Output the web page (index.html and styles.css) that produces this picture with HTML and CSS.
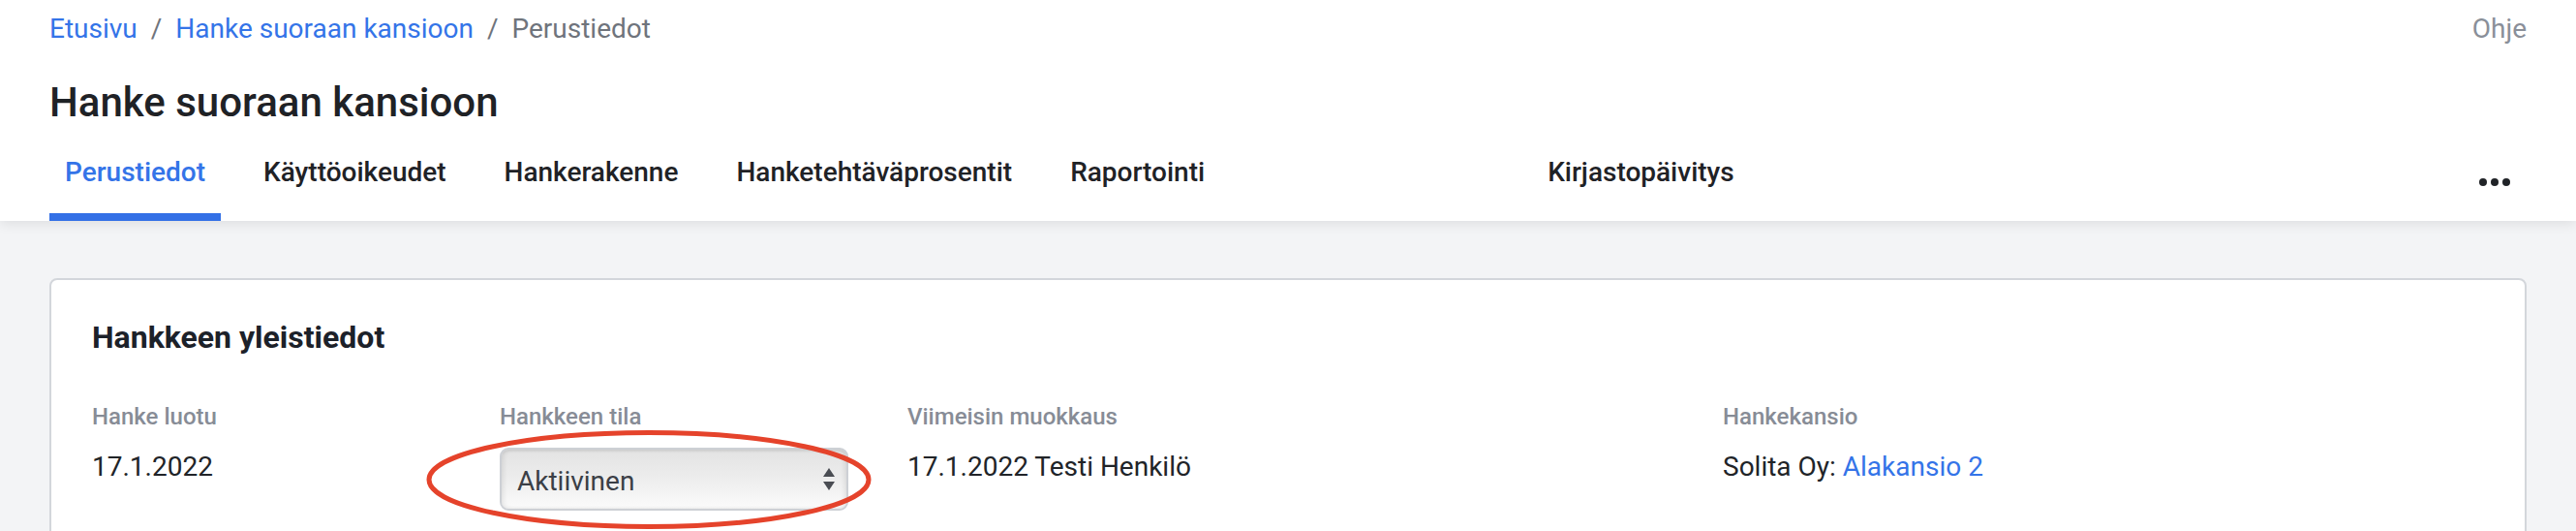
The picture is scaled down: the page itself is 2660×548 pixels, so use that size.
FILE: index.html
```html
<!DOCTYPE html>
<html lang="fi">
<head>
<meta charset="utf-8">
<title>Hanke suoraan kansioon – Perustiedot</title>
<link rel="stylesheet" href="styles.css">
</head>
<body>
<header class="topbar">
  <div class="crumbs-row">
    <nav class="crumbs">
      <a class="crumb-link" href="#">Etusivu</a>
      <span class="sep">/</span>
      <a class="crumb-link" href="#">Hanke suoraan kansioon</a>
      <span class="sep">/</span>
      <span class="crumb-current">Perustiedot</span>
    </nav>
    <a class="help" href="#">Ohje</a>
  </div>
  <h1 class="page-title">Hanke suoraan kansioon</h1>
  <nav class="tabs">
    <a class="tab active" href="#">Perustiedot</a>
    <a class="tab" href="#">Käyttöoikeudet</a>
    <a class="tab" href="#">Hankerakenne</a>
    <a class="tab" href="#">Hanketehtäväprosentit</a>
    <a class="tab" href="#">Raportointi</a>
    <a class="tab tab-far" href="#">Kirjastopäivitys</a>
    <button class="tab more" type="button" aria-label="Lisää">
      <svg width="32" height="8" viewBox="0 0 32 8"><circle cx="4" cy="4" r="4"/><circle cx="16" cy="4" r="4"/><circle cx="28" cy="4" r="4"/></svg>
    </button>
  </nav>
</header>
<main class="content">
  <section class="card">
    <h2 class="card-title">Hankkeen yleistiedot</h2>
    <div class="fields">
      <div class="field">
        <div class="label">Hanke luotu</div>
        <div class="value">17.1.2022</div>
      </div>
      <div class="field">
        <div class="label">Hankkeen tila</div>
        <div class="select-wrap">
          <div class="select">
            <span>Aktiivinen</span>
            <svg class="select-arrows" width="12" height="23" viewBox="0 0 12 23"><path d="M6 0 L12 9 L0 9 Z"/><path d="M0 14 L12 14 L6 23 Z"/></svg>
          </div>
          <svg class="annotation" width="460" height="102" viewBox="0 0 460 102"><ellipse cx="230" cy="51" rx="227" ry="48.5"/></svg>
        </div>
      </div>
      <div class="field">
        <div class="label">Viimeisin muokkaus</div>
        <div class="value">17.1.2022 Testi Henkilö</div>
      </div>
      <div class="field field-folder">
        <div class="label">Hankekansio</div>
        <div class="value">Solita Oy: <a class="link" href="#">Alakansio 2</a></div>
      </div>
    </div>
  </section>
</main>
</body>
</html>
```

FILE: styles.css
```css
html, body {
  margin: 0;
  padding: 0;
  overflow: hidden;
}
body {
  font-family: Roboto, "Liberation Sans", Arial, sans-serif;
  background: #f3f4f6;
  color: #202327;
}
a {
  text-decoration: none;
}

/* Header */
.topbar {
  background: #ffffff;
  padding: 0 51px;
  box-shadow: 0 3px 12px rgba(0, 0, 0, 0.09);
  position: relative;
}
.crumbs-row {
  display: flex;
  justify-content: space-between;
  padding-top: 12px;
  font-size: 28px;
  line-height: 36px;
}
.crumbs {
  display: flex;
}
.crumb-link {
  color: #3474e8;
}
.sep {
  color: #6f747c;
  margin: 0 14px;
}
.crumb-current {
  color: #6f747c;
}
.help {
  color: #8a8f99;
}
.page-title {
  margin: 32px 0 0;
  font-size: 42px;
  line-height: 52px;
  font-weight: 500;
  color: #1f2226;
}
.tabs {
  display: flex;
  gap: 28px;
  margin-top: 26px;
}
.tab {
  display: block;
  font-size: 28px;
  line-height: 40px;
  font-weight: 500;
  color: #1f2226;
  padding: 0 16px 22px;
  border-bottom: 8px solid transparent;
}
.tab.active {
  color: #3474e8;
  border-bottom-color: #3370e6;
}
.tab-far {
  margin-left: 294px;
}
.more {
  margin-left: auto;
  background: none;
  border-top: 0;
  border-left: 0;
  border-right: 0;
  font: inherit;
  height: 70px;
  display: flex;
  align-items: flex-start;
  padding-right: 17px;
  cursor: pointer;
}
.more svg {
  display: block;
  margin-top: 26px;
  fill: #202327;
}

/* Content */
.content {
  padding: 59px 51px 0;
}
.card {
  background: #ffffff;
  border: 2px solid #d3d6db;
  border-radius: 8px;
  padding: 39px 42px 200px;
}
.card-title {
  margin: 0 0 46px;
  font-size: 32px;
  line-height: 40px;
  font-weight: 700;
  color: #1c2129;
}
.fields {
  display: grid;
  grid-template-columns: repeat(6, 421px);
}
.field-folder {
  grid-column: 5;
}
.label {
  font-size: 24px;
  line-height: 32px;
  font-weight: 500;
  color: #878c96;
  margin-bottom: 16px;
}
.value {
  font-size: 28px;
  line-height: 40px;
  color: #212428;
}
.link {
  color: #3474e8;
}

/* Select */
.select-wrap {
  position: relative;
  width: 360px;
}
.select {
  box-sizing: border-box;
  width: 360px;
  height: 65px;
  border: 2px solid #cdd0d5;
  border-radius: 9px;
  background: linear-gradient(to bottom, #e3e3e3 0%, #ececec 45%, #fbfbfb 100%);
  box-shadow: inset 3px 0 4px rgba(0, 0, 0, 0.06), inset -3px 0 4px rgba(0, 0, 0, 0.06), inset 0 2px 3px rgba(0, 0, 0, 0.05);
  display: flex;
  align-items: center;
  justify-content: space-between;
  padding: 4px 12px 0 16px;
  font-size: 28px;
  line-height: 36px;
  color: #3b3f46;
}
.select-arrows {
  display: block;
  fill: #4a4d53;
  margin-top: -4px;
}
.annotation {
  position: absolute;
  left: -76px;
  top: -18px;
  fill: none;
  stroke: #e5432b;
  stroke-width: 5px;
  overflow: visible;
}
```
